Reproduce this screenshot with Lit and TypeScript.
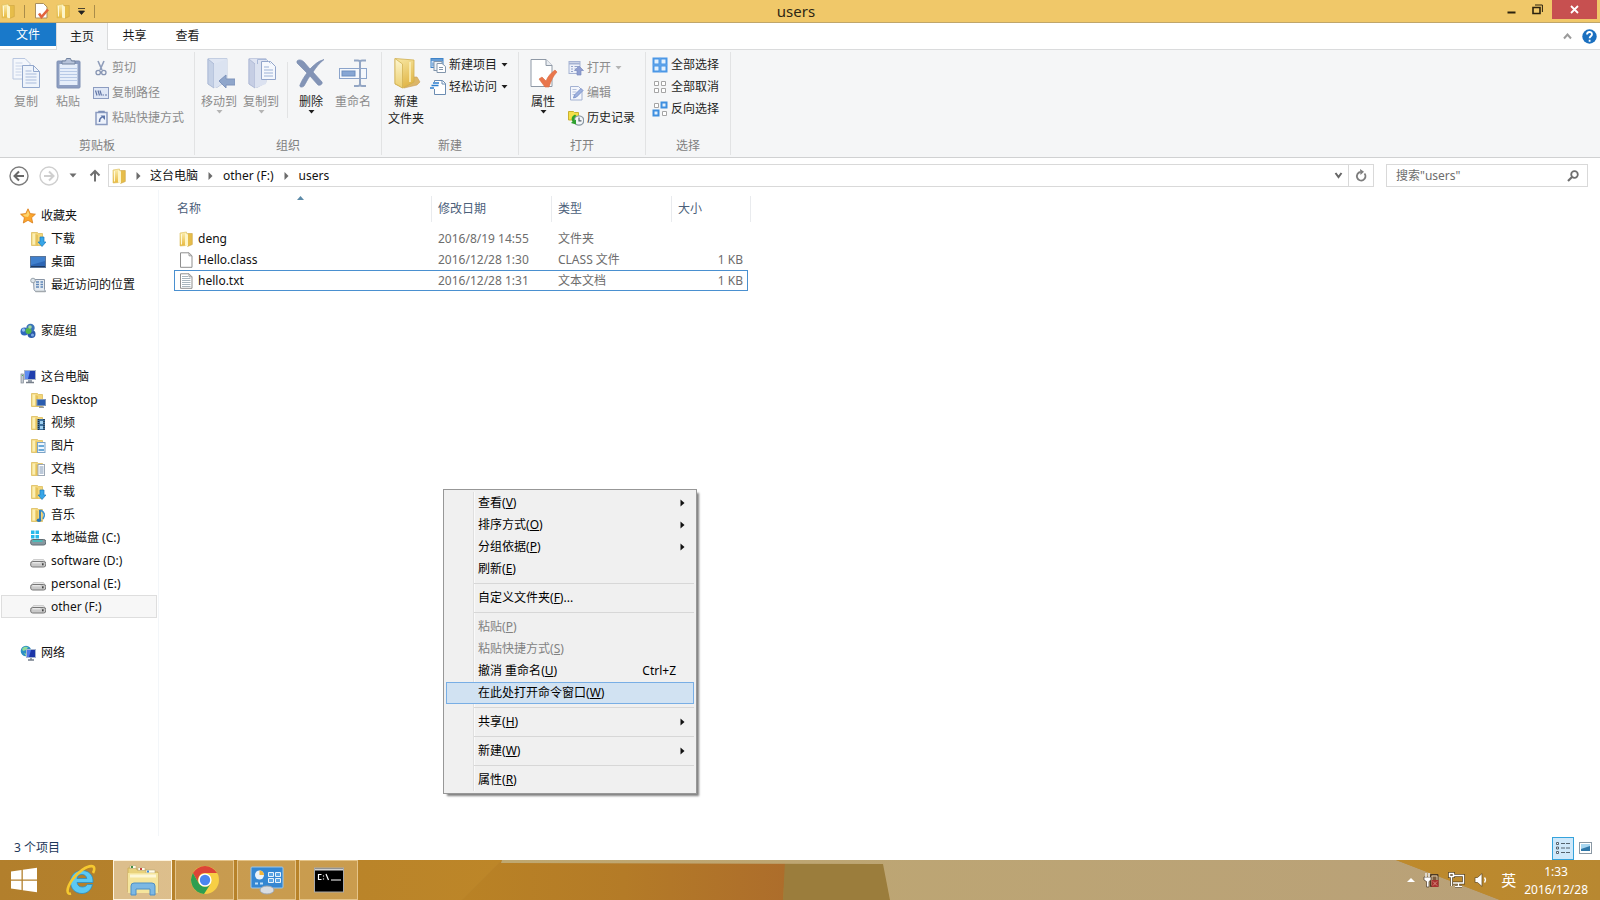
import { LitElement, html, svg, css, nothing, TemplateResult } from "lit";
import { customElement, property } from "lit/decorators.js";
import { classMap } from "lit/directives/class-map.js";

const icon = (w: number, h: number, body: unknown) =>
  html`<svg width=${w} height=${h} viewBox="0 0 ${w} ${h}" fill="none" aria-hidden="true">${body}</svg>`;

const smallFolder = svg`
  <defs><linearGradient id="gold" x2="0" y2="1"><stop offset="0" stop-color="#fbeeb0"/><stop offset="1" stop-color="#e8b83c"/></linearGradient></defs>
  <path d="M2 2 8.500 1V14.500L2 15Z" fill="url(#gold)" stroke="#dcbc58" stroke-width=".6"/>
  <path d="M9.500 2.500h4.800v11L9.500 15.500Z" fill="#e6bd4a" stroke="#cda541" stroke-width=".6"/>
  <path d="M7 2 10 3.500V15.500L7 14.500Z" fill="#fdf5c8"/>
  <path d="M3.500 3v10.500" stroke="#fff8d6"/>`;

const navFolder = svg`
  <path d="M1.500 1.500h6l1 1h4v12h-11Z" fill="#f3d67a" stroke="#dcbc60" stroke-width=".8"/>
  <path d="M2.500 2.500h3v11h-3Z" fill="#fbefb4"/>
  <path d="M5.500 3 8 4v11l-2.500-1Z" fill="#e6c35c"/>`;

const page16 = svg`
  <path d="M2.500.8h8.500l3 3v11.500H2.500Z" fill="#fff" stroke="#8f8f8f"/>
  <path d="M11 .8v3h3" stroke="#9a9a9a"/>`;

const drive = svg`
  <path d="M3.500 6.500h10L16 10H.8Z" fill="#e7e7e7" stroke="#b5b5b5" stroke-width=".6"/>
  <rect x=".7" y="8.500" width="15" height="5.500" rx="2" fill="#c9c9c9" stroke="#777"/>
  <path d="M2.500 9.800h8" stroke="#f6f6f6"/>
  <rect x="12" y="10.300" width="1.600" height="2" fill="#444"/>`;

const icons: Record<string, TemplateResult> = {
  folder: icon(16, 16, smallFolder),
  star: icon(16, 16, svg`<path d="M8 .8 10.200 5.600 15.400 6.200 11.600 9.700 12.700 15 8 12.300 3.300 15 4.400 9.700.6 6.200 5.800 5.600Z" fill="#fba62d" stroke="#d97c16" stroke-width=".8"/><path d="M8 2.500 9.500 6.300 8 9 4.800 8.500 2.500 6.800 6.300 6.200Z" fill="#fdd56f"/>`),
  download: icon(16, 16, svg`${navFolder}<path d="M10 6h4v5h2l-4 4.500L8 11h2Z" fill="#37a6e8" stroke="#1a78bd" stroke-width=".7"/>`),
  desktop: icon(16, 16, svg`<rect x=".5" y="2.500" width="15" height="11" fill="#2d66b4" stroke="#5a7599"/><path d="M1 3h14v4L1 11Z" fill="#4080cd"/><path d="M1 12.500h14" stroke="#1d3a63"/>`),
  recent: icon(16, 16, svg`<path d="M3.500 2.500h11v10l1 2h-10l-1.500-2Z" fill="#e4eaf0" stroke="#8995a5"/><path d="M6 5h3M10.500 5H13M6 7.500h3M10.500 7.500H13M6 10h3M10.500 10H13" stroke="#5f87b8" stroke-width="1.300"/><circle cx="3" cy="3.500" r="2.300" fill="#dfe5ea" stroke="#9aa5ae"/><path d="M5.500 14.500h10" stroke="#a3a9ae" stroke-width="1.500"/>`),
  homegroup: icon(16, 16, svg`<circle cx="4.500" cy="8.500" r="4" fill="#2f68bd"/><circle cx="3.500" cy="7" r="1.700" fill="#8fbcf0"/><circle cx="11.500" cy="11" r="4" fill="#2a5aa8"/><circle cx="12.500" cy="12" r="1.600" fill="#76a5e4"/><circle cx="10.500" cy="5" r="4.200" fill="#3b74b8"/><circle cx="8.500" cy="8" r="3" fill="#54b84a"/><circle cx="10" cy="4" r="1.800" fill="#9fd6a0"/>`),
  computer: icon(16, 16, svg`<rect x="4.500" y="1.500" width="11" height="9" fill="#1f3fae" stroke="#a9b6cc"/><path d="M5 2h5L8 10H5Z" fill="#5f8df0"/><path d="M8 11h4v2H8Z" fill="#9aa3ad"/><path d="M6 13.500h8" stroke="#777f8a" stroke-width="1.500"/><rect x="1" y="5" width="2.500" height="9" fill="#c5cbd2" stroke="#7f8893" stroke-width=".7"/><path d="M2 6.500h1" stroke="#4cbf4c"/>`),
  navDesktop: icon(16, 16, svg`${navFolder}<rect x="7" y="7.500" width="8.500" height="6" fill="#2a5db0" stroke="#7d94b8"/><path d="M9 15.200h5" stroke="#666f7a"/>`),
  video: icon(16, 16, svg`${navFolder}<rect x="7.500" y="4" width="7.500" height="11" fill="#3c6f9e"/><path d="M8.500 4v11M14 4v11" stroke="#1c2d3d" stroke-dasharray="1 1" stroke-width="1.300"/><path d="M10 6h3v3h-3zM10 11h3v3h-3z" fill="#9fd0f0"/>`),
  picture: icon(16, 16, svg`${navFolder}<rect x="7.500" y="4.500" width="7.500" height="10" fill="#eef6fd" stroke="#7ba3c7"/><path d="M8.500 7h5.500v2H8.500zM8.500 11h5.500v2H8.500z" fill="#6ba9d8"/>`),
  document: icon(16, 16, svg`${navFolder}<rect x="8" y="3.500" width="6.500" height="11" fill="#fff" stroke="#9da8b5"/><path d="M9.500 6h4M9.500 8h4M9.500 10h4M9.500 12h4" stroke="#7a94b4"/>`),
  music: icon(16, 16, svg`${navFolder}<path d="M10 3v10" stroke="#2878b8" stroke-width="1.800"/><path d="M10.500 3c4 2 5 5 2.500 9" stroke="#3b92d0" stroke-width="1.600"/><ellipse cx="9" cy="13.300" rx="2.300" ry="1.700" fill="#2878b8"/>`),
  diskC: icon(16, 16, svg`<path d="M1 .5h3.500V4H1zM5.500.5H9V4H5.500zM1 5h3.500v3.500H1zM5.500 5H9v3.500H5.500z" fill="#29b9ea"/><rect x=".7" y="9.500" width="15" height="5.500" rx="2" fill="#87989f" stroke="#606d74"/><path d="M2.500 11h10" stroke="#39c4c0" stroke-width="1.500"/>`),
  drive: icon(16, 16, drive),
  network: icon(16, 16, svg`<circle cx="6" cy="6" r="5.300" fill="#2c8fc4"/><path d="M2 4c2-3 5-2.500 6-1.500L6 5l-3 1Z" fill="#8fdc9a"/><path d="M4 8l3 1-1 2Z" fill="#8fdc9a"/><rect x="6.500" y="4.500" width="9" height="8" fill="#1c35a8" stroke="#a7b5d0"/><path d="M7 5h4L9 12H7Z" fill="#4f76e8"/><path d="M11 13v1.500M8 15h6" stroke="#767f8c" stroke-width="1.400"/>`),
  fileClass: icon(16, 16, page16),
  fileText: icon(16, 16, svg`${page16}<path d="M4 3.500h6M4 5.500h8.500M4 7.500h8.500M4 9.500h8.500M4 11.500h8.500M4 13.500h8.500" stroke="#a9b6be"/>`),
  qatCheck: icon(16, 16, svg`<path d="M2.500.5h8l3.500 3.500v11H2.500Z" fill="#fff" stroke="#a98f5d"/><path d="M6 10.500 8.500 14 15 6.500" stroke="#e2643c" stroke-width="2.600"/>`),
  copy: icon(32, 32, svg`<path d="M3 1.500h12l5 5V22H3Z" fill="#f4f7fc" stroke="#b9c7e0"/><path d="M5.500 6h7M5.500 9h9M5.500 12h6M5.500 15h6M5.500 18h6" stroke="#c9d4e8"/><path d="M12.500 8.500h11l6 6v16h-17Z" fill="#eff4fb" stroke="#93a8cd"/><path d="M23.500 8.500v6h6" stroke="#93a8cd"/><path d="M15.500 14h6M15.500 17h11M15.500 20h11M15.500 23h11M15.500 26h11" stroke="#a9bbdb"/>`),
  paste: icon(32, 32, svg`<rect x="5" y="4" width="23" height="27" rx="1" fill="#8d9ec1" stroke="#7f90b4"/><rect x="7.500" y="7" width="18" height="21" fill="#e6eefa"/><path d="M8 11.500h17M8 14.500h17M8 17.500h17M8 20.500h17M8 23.500h17" stroke="#b7c9e6"/><path d="M10 7V4h3.500l1-2.500h4l1 2.500H23v3Z" fill="#b7c3da" stroke="#71829f"/>`),
  cut: icon(16, 16, svg`<path d="M5 1l4 9M11 1 7 10" stroke="#8f9dba" stroke-width="1.600"/><circle cx="5.200" cy="12.500" r="2.200" stroke="#8795b3" stroke-width="1.300"/><circle cx="10.800" cy="12.500" r="2.200" stroke="#8795b3" stroke-width="1.300"/>`),
  copyPath: icon(16, 16, svg`<rect x=".5" y="2.500" width="15" height="11" fill="#dfe7f6" stroke="#8c9cc0"/><path d="M2.500 5.500l1.500 5M5 5.500l1.500 5M7 5.500 8.500 10.500M9.500 10h1.500M12 10h2" stroke="#6276a6" stroke-width="1.200"/>`),
  pasteShortcut: icon(16, 16, svg`<rect x="3" y="2.500" width="11" height="12" fill="#edf2fb" stroke="#8a9bc0" stroke-width="1.500"/><path d="M6 2.500v-1h5v1" stroke="#7e90b8" stroke-width="1.500"/><path d="M6.500 12c0-3 1-4.500 3-5" stroke="#5d74a8" stroke-width="1.500"/><path d="M7.500 5.500H12V10Z" fill="#5d74a8"/>`),
  moveTo: icon(32, 32, svg`<path d="M5 1.500h19v22l-10 7L5 27Z" fill="#dfe6f3" stroke="#c3cee2"/><path d="M5 2l6 5v24l-6-4Z" fill="#c5d1e6" stroke="#adbbd6"/><path d="M11 7 24 2v22l-13 7Z" fill="#dbe3f1"/><path d="M16 24l7-6v4h9v6h-9v3Z" fill="#8fa6cb" stroke="#7f94bb"/>`),
  copyTo: icon(32, 32, svg`<path d="M4 1.500h17v24l-9 5-8-3.500Z" fill="#dfe4f2" stroke="#c3cbe0"/><path d="M4 2l6 5v24l-6-4Z" fill="#c6cee4" stroke="#b0bbd6"/><path d="M10 7 21 3v24l-11 4Z" fill="#dce2f0"/><path d="M16.500 4.500h9l5 5v13h-14Z" fill="#f5f8fd" stroke="#93a6cb"/><path d="M12.500 7V2.500h9l4 4" stroke="#a9b9d8"/><path d="M19 10h5M19 13h9M19 16h9M19 19h9" stroke="#9db2d6"/>`),
  remove: icon(32, 32, svg`<path d="M2 4c2-2 5-1 7 1l6 7c4-4 8-8 14-9.500-5 4-8 8-11 12.500l9 10c1 2-2 4-4 3l-8-9c-3 4-4 7-6 10-2 2-5 1-4-1 2-5 4-8 7-12L2 6Z" fill="#8394b6" stroke="#7a8cb0" stroke-width=".7"/>`),
  rename: icon(32, 32, svg`<rect x="2.500" y="11.500" width="27" height="10" fill="#f5f8fc" stroke="#8ba4cb"/><rect x="5" y="14" width="13" height="5" fill="#86a6d4" stroke="#6c8ebf"/><path d="M17 3.500h4q2 0 2 2V27q0 2-2 2h-4M29 3.500h-4q-2 0-2 2V27q0 2 2 2h4" stroke="#93a6c4" stroke-width="2"/>`),
  newFolder: icon(32, 32, svg`<defs>
    <linearGradient id="face" x2=".3" y2="1"><stop offset="0" stop-color="#f8e8a4"/><stop offset="1" stop-color="#e2b84b"/></linearGradient>
    <linearGradient id="spine" x2="0" y2="1"><stop offset="0" stop-color="#fdf6cf"/><stop offset="1" stop-color="#eccf70"/></linearGradient></defs>
    <path d="M22 20h5l3 5-3 3-13 3Z" fill="#dcb668" stroke="#c9a05a" stroke-width=".6"/>
    <path d="M5 1.500 24 3v22l-11 6-8-4Z" fill="url(#face)" stroke="#cfae52" stroke-width=".8"/>
    <path d="M5 1.500 12.500 7v24L5 26.500Z" fill="url(#spine)" stroke="#d2b256" stroke-width=".8"/>
    <path d="M20 5v20" stroke="#fbf0bb" stroke-width="1.500"/>`),
  newItem: icon(16, 16, svg`<rect x="1" y="1.500" width="12" height="9" fill="#d7e8fa" stroke="#3e83c8"/><path d="M1 3h12" stroke="#3e83c8" stroke-width="1.500"/><path d="M3 5.500v4" stroke="#3e83c8"/><rect x="4" y="4.500" width="8" height="9" fill="#eef3f8" stroke="#8296ac"/><path d="M7 6.500h5l3.500 3V15.500H7Z" fill="#fff" stroke="#8296ac"/><path d="M9 10.500h4M9 12.500h4" stroke="#8296ac"/>`),
  easyAccess: icon(16, 16, svg`<path d="M4.500 9v6.500h11v-11l-3-3h-8" fill="#fff"/><path d="M4.500 10v5.500h11v-11l-3-3h-8V3" stroke="#6b8cb2"/><path d="M12 1.500V5h3.500" stroke="#6b8cb2"/><path d="M3 4h6M1.500 6.500h7M0 9h4" stroke="#2d7fd0" stroke-width="1.300"/>`),
  properties: icon(32, 32, svg`<path d="M4 2.500h15l6 6v21H4Z" fill="#fff" stroke="#8f99a6"/><path d="M19 2.500v6h6" fill="#e9edf2" stroke="#8f99a6"/><path d="M12 22l3-2 4 4c2-5 5-8 9-11l2 2c-4 4-6 9-8 15h-4Z" fill="#e9764c" stroke="#d96c42" stroke-width=".6"/>`),
  open: icon(16, 16, svg`<rect x="1" y="1.500" width="11" height="12" fill="#edf1fa" stroke="#a6b3d3"/><path d="M1 3.500h11" stroke="#a6b3d3" stroke-width="2"/><path d="M3 6.500h2M3 9h2M3 11.500h2M6.500 6.500H10M6.500 9H8" stroke="#95a5ca"/><path d="M11 6l4.500 4.500H13V15H9v-4.500H6.500Z" fill="#8f9ed0" stroke="#7a8abf" stroke-width=".7"/>`),
  edit: icon(16, 16, svg`<path d="M2.500 1.500h8L14 5v10H2.500Z" fill="#f4f6fc" stroke="#a3b1d2"/><path d="M4.500 4.500h4M4.500 7h4M4.500 9.500h3" stroke="#b5c1dd"/><path d="M5.500 13l1-3L13 3.500 15 5.500 8.500 12Z" fill="#9eb1de" stroke="#7f95cc"/>`),
  history: icon(16, 16, svg`<path d="M.5 1.500h5l1 1h4V10H.5Z" fill="#f5e048" stroke="#c9b030"/><circle cx="11" cy="10.500" r="4.700" fill="#f4f7f9" stroke="#8b98a3" stroke-width="1.300"/><path d="M11 7.500v3.300h2.500" stroke="#56636e" stroke-width="1.200"/><path d="M7 4.500C3.500 6 3 9 4.500 11.500L3 13l5 1.500V9.500L6.500 10.500C6 8.500 6.500 7 8.500 6Z" fill="#2fa12f"/>`),
  selectAll: icon(16, 16, svg`<path d="M.5.500h15v15H.5Z" fill="#4a97e6"/><path d="M2.500 2.500h4v4h-4zM9.500 2.500h4v4h-4zM2.500 9.500h4v4h-4zM9.500 9.500h4v4h-4z" fill="#e4f1fd"/><path d="M8 .5v15M.5 8h15" stroke="#7ab3ee" stroke-width=".6"/>`),
  selectNone: icon(16, 16, svg`<path d="M2.500 2.500h4v4h-4zM9.500 2.500h4v4h-4zM2.500 9.500h4v4h-4zM9.500 9.500h4v4h-4z" fill="#fff" stroke="#a5a5a5"/>`),
  invert: icon(16, 16, svg`<path d="M2.500 2.500h4v4h-4zM10.500 10.500h4v4h-4z" fill="#fff" stroke="#a5a5a5"/><path d="M9.500 1.500h5v5h-5zM1.500 9.500h5v5h-5z" fill="#e4f1fd" stroke="#3e8fe0" stroke-width="2"/>`),
};

const caret = html`<svg class="caret" width="7" height="4" viewBox="0 0 7 4" aria-hidden="true"><path d="M.5 0h6L3.500 3.500Z" fill="currentColor"/></svg>`;

@customElement("ribbon-button")
export class RibbonButton extends LitElement {
  @property() icon = "";
  @property() label = "";
  @property() second = "";
  @property({ type: Boolean }) big = false;
  @property({ type: Boolean }) off = false;
  @property({ type: Boolean }) menu = false;

  static styles = css`
    :host { display: block; }
    button {
      display: flex; align-items: center; gap: 3px; width: 100%; height: 22px; padding: 0;
      border: 0; background: none; color: #1e1e1e; font: inherit; white-space: nowrap;
    }
    button:disabled { color: #8c8c8c; }
    button:disabled .caret { color: #b4b4b4; }
    .caret { margin-left: 1px; }
    .big { flex-direction: column; height: auto; gap: 0; }
    .big svg { display: block; }
    .big span { line-height: 17px; }
    .big span:first-of-type { margin-top: 4px; }
    .big .caret { margin: 0; }
  `;

  render() {
    return html`<button type="button" class=${classMap({ big: this.big })} ?disabled=${this.off}>
      ${icons[this.icon]}<span>${this.label}</span>${this.second ? html`<span>${this.second}</span>` : nothing}${this.menu ? caret : nothing}
    </button>`;
  }
}

type NavItem = { icon: string; label: string; child?: boolean; current?: boolean };

const navGroups: NavItem[][] = [
  [
    { icon: "star", label: "收藏夹" },
    { icon: "download", label: "下载", child: true },
    { icon: "desktop", label: "桌面", child: true },
    { icon: "recent", label: "最近访问的位置", child: true },
  ],
  [{ icon: "homegroup", label: "家庭组" }],
  [
    { icon: "computer", label: "这台电脑" },
    { icon: "navDesktop", label: "Desktop", child: true },
    { icon: "video", label: "视频", child: true },
    { icon: "picture", label: "图片", child: true },
    { icon: "document", label: "文档", child: true },
    { icon: "download", label: "下载", child: true },
    { icon: "music", label: "音乐", child: true },
    { icon: "diskC", label: "本地磁盘 (C:)", child: true },
    { icon: "drive", label: "software (D:)", child: true },
    { icon: "drive", label: "personal (E:)", child: true },
    { icon: "drive", label: "other (F:)", child: true, current: true },
  ],
  [{ icon: "network", label: "网络" }],
];

const files = [
  { icon: "folder", name: "deng", date: "2016/8/19 14:55", type: "文件夹", size: "" },
  { icon: "fileClass", name: "Hello.class", date: "2016/12/28 1:30", type: "CLASS 文件", size: "1 KB" },
  { icon: "fileText", name: "hello.txt", date: "2016/12/28 1:31", type: "文本文档", size: "1 KB", focused: true },
];

type MenuItem = { label: string; key: string; tail?: string; sub?: boolean; off?: boolean; hot?: boolean; accel?: string };

const menuGroups: MenuItem[][] = [
  [
    { label: "查看", key: "V", sub: true },
    { label: "排序方式", key: "O", sub: true },
    { label: "分组依据", key: "P", sub: true },
    { label: "刷新", key: "E" },
  ],
  [{ label: "自定义文件夹", key: "F", tail: "..." }],
  [
    { label: "粘贴", key: "P", off: true },
    { label: "粘贴快捷方式", key: "S", off: true },
    { label: "撤消 重命名", key: "U", accel: "Ctrl+Z" },
    { label: "在此处打开命令窗口", key: "W", hot: true },
  ],
  [{ label: "共享", key: "H", sub: true }],
  [{ label: "新建", key: "W", sub: true }],
  [{ label: "属性", key: "R" }],
];

@customElement("context-menu")
export class ContextMenu extends LitElement {
  static styles = css`
    :host { display: block; width: 254px; box-sizing: border-box; border: 1px solid #979797; padding: 2px; background: #f0f0f0; box-shadow: 3px 3px 2px -1px rgba(0, 0, 0, 0.5); }
    .menu { background: linear-gradient(to right, transparent 27px, #dfdfdf 27px, #dfdfdf 28px, #fafafa 28px, #fafafa 29px, transparent 29px); }
    .group + .group { margin-top: 3px; }
    .group + .group::before { content: ""; display: block; height: 3px; margin-left: 28px; border-top: 1px solid #d7d7d7; }
    button {
      display: flex; align-items: center; width: 100%; height: 22px; box-sizing: border-box; padding: 0 8px 0 31px;
      border: 1px solid transparent; background: none; color: #000; font: inherit; text-align: left;
    }
    button:disabled { color: #828282; }
    .hot { background: #d1e2f2; border-color: #78aee5; }
    .label { flex: 1; }
    .accel { margin-right: 9px; }
  `;

  render() {
    return html`<div class="menu" role="menu">
      ${menuGroups.map((group) => html`<div class="group" role="group">
        ${group.map((m) => html`<button type="button" role="menuitem" class=${classMap({ hot: !!m.hot })} ?disabled=${m.off}>
          <span class="label">${m.label}(<u>${m.key}</u>)${m.tail ?? ""}</span>
          ${m.accel ? html`<span class="accel">${m.accel}</span>` : nothing}
          ${m.sub ? html`<svg width="5" height="8" viewBox="0 0 5 8" aria-hidden="true"><path d="M.5.500 4.500 4 .5 7.500Z" fill="#111"/></svg>` : nothing}
        </button>`)}
      </div>`)}
    </div>`;
  }
}

@customElement("app-root")
export class AppRoot extends LitElement {
  static styles = css`
    :host {
      display: flex; flex-direction: column; position: relative; height: 100vh; overflow: hidden; background: #fff; color: #1a1a1a;
      font: 12px/16px "Noto Sans", "Noto Sans CJK SC", sans-serif;
    }
    button, input { font: inherit; }
    button { padding: 0; border: 0; background: none; color: inherit; }
    a { color: inherit; text-decoration: none; }
    svg { flex: none; }

    .titlebar { display: flex; height: 22px; background: #f0c869; border-bottom: 1px solid #c0a66a; }
    .quick { display: flex; align-items: center; gap: 6px; width: 94px; }
    .quick svg { display: block; }
    .quick i { flex: none; width: 1px; height: 13px; margin: 0 2px; background: #a98c4a; }
    .titlebar h1 { flex: 1; margin: 0; text-align: center; font-size: 15px; line-height: 23px; font-weight: 400; color: #2e2614; }
    .controls { display: flex; align-items: flex-start; padding-right: 3px; }
    .controls button { display: grid; place-items: center; width: 26px; height: 19px; }
    .controls .restore { margin-right: 2px; }
    .controls .close { width: 45px; background: #c75050; }

    .tabs { display: flex; height: 26px; border-bottom: 1px solid #dadbdc; }
    .tabs button { width: 53px; }
    .tabs .file { width: 56px; height: 23px; background: #1979ca; color: #fff; }
    .tabs .active { box-sizing: border-box; width: 52px; height: 27px; background: #f5f6f7; border: 1px solid #dadbdc; border-width: 0 1px; }
    .tabs .tools { display: flex; flex: 1; align-items: center; justify-content: flex-end; gap: 6px; padding-right: 3px; }
    .tabs .tools button { display: grid; place-items: center; width: 16px; }

    .ribbon { display: flex; height: 107px; background: #f5f6f7; border-bottom: 1px solid #d0d1d2; }
    .group { display: flex; flex-direction: column; box-sizing: border-box; margin: 2px 0; padding-top: 5px; border-right: 1px solid #e2e3e4; }
    .tools-row { display: flex; flex: 1; }
    .caption { line-height: 16px; padding-bottom: 1px; text-align: center; color: #808080; }
    .clipboard { width: 195px; }
    .organize { width: 187px; }
    .create { width: 137px; }
    .opening { width: 127px; }
    .selecting { width: 85px; }
    .wide { width: 42px; }
    .loose { display: flex; flex-direction: column; gap: 3px; }
    .tight { display: flex; flex-direction: column; padding-left: 3px; margin-top: -3px; }
    .clipboard .tools-row { padding-left: 5px; }
    .clipboard .loose { padding-left: 4px; }
    .organize .tools-row { padding-left: 3px; }
    .rule { width: 1px; height: 56px; margin: 5px 2px 0 5px; background: #e2e3e4; }
    .create .tools-row, .opening .tools-row, .selecting .tools-row { padding-left: 3px; }
    .opening .loose { padding-left: 4px; }

    .address { display: flex; align-items: center; gap: 12px; padding: 6px 12px 3px 9px; }
    .travel { display: flex; align-items: center; gap: 10px; width: 87px; }
    .travel button { display: grid; place-items: center; }
    .travel .up { margin-left: 2px; }
    .path { display: flex; flex: 1; align-items: center; box-sizing: border-box; height: 23px; border: 1px solid #d9d9d9; }
    .crumbs { display: flex; flex: 1; align-items: center; padding-left: 2px; color: #111; }
    .crumbs .sep { margin: 0 10px; }
    .crumbs .first { margin: 0 9px; }
    .path button { display: grid; place-items: center; width: 20px; height: 21px; }
    .path .reload { width: 25px; border-left: 1px solid #d9d9d9; }
    .search { display: flex; align-items: center; box-sizing: border-box; width: 202px; height: 23px; padding: 0 8px 0 9px; border: 1px solid #d9d9d9; }
    .search input { flex: 1; min-width: 0; padding: 0; border: 0; outline: 0; background: none; }
    .search input::placeholder { color: #6d6d6d; opacity: 1; }

    .body { display: flex; flex: 1; min-height: 0; }
    nav { box-sizing: border-box; width: 159px; padding: 14px 1px 0 1px; border-right: 1px solid #f3f6f9; }
    nav ul { margin: 0 0 23px; padding: 0; list-style: none; }
    nav a { display: flex; align-items: center; gap: 5px; box-sizing: border-box; height: 23px; padding-left: 18px; border: 1px solid transparent; color: #111; white-space: nowrap; }
    nav .child { padding-left: 28px; }
    nav .current { background: #f7f7f7; border-color: #dedede; }

    .files { flex: 1; padding: 6px 0 0 15px; }
    table { width: 577px; border-spacing: 0; table-layout: fixed; }
    .c-name { width: 258px; }
    .c-mid { width: 120px; }
    .c-size { width: 76px; }
    .c-rest { width: 3px; }
    th { position: relative; height: 26px; padding: 0 0 0 6px; font-weight: 400; text-align: left; color: #4c607a; border-right: 1px solid #e9ebee; }
    th:first-child { padding-left: 3px; }
    .sort { position: absolute; left: 123px; top: 0; }
    thead::after { content: ""; display: block; height: 6px; }
    tbody td { height: 19px; padding: 0 0 0 6px; border: 1px solid transparent; border-width: 1px 0; color: #6d6d6d; }
    tbody .name { padding-left: 3px; border-left-width: 1px; color: #111; }
    tbody .size { padding-right: 4px; text-align: right; border-right-width: 1px; }
    tbody .rest { padding: 0; }
    .focused td:not(.rest) { border-color: #4a90d0; }
    .cell { display: flex; align-items: center; gap: 4px; height: 19px; }

    .status { display: flex; align-items: center; justify-content: space-between; height: 24px; padding: 0 4px 0 14px; color: #1e395b; }
    .views { display: flex; }
    .views button { display: grid; place-items: center; box-sizing: border-box; width: 22px; height: 23px; }
    .views .on { background: #cfe8fa; border: 1px solid #35a3dc; }

    .taskbar { position: relative; display: flex; height: 40px; background: #b8862f; }
    .wallpaper { position: absolute; inset: 0; width: 100%; height: 100%; }
    .apps, .tray { position: relative; display: flex; }
    .apps { flex: 1; gap: 3px; }
    .apps button { display: grid; place-items: center; box-sizing: border-box; width: 59px; height: 40px; }
    .apps .start { width: 48px; }
    .apps .running { background: rgba(236, 209, 160, 0.32); border: 1px solid rgba(255, 236, 195, 0.5); }
    .apps .front { background: rgba(247, 232, 205, 0.6); border-color: #fdf3de; }
    .tray { align-items: center; gap: 8px; padding-right: 12px; color: #fff; }
    .tray button { display: grid; place-items: center; height: 40px; }
    .tray .ime { font-size: 15px; padding: 0 0 0 4px; }
    .tray .clock { line-height: 18px; padding-top: 1px; text-align: center; }

    context-menu { position: absolute; left: 443px; top: 489px; }
  `;

  private crumb(first = false) {
    return html`<svg class=${first ? "first" : "sep"} width="5" height="8" viewBox="0 0 5 8" aria-hidden="true"><path d="M.5 0 4.500 4 .5 8Z" fill="#6b6b6b"/></svg>`;
  }

  private ribbon() {
    return html`<section class="ribbon" aria-label="主页">
      <div class="group clipboard">
        <div class="tools-row">
          <ribbon-button class="wide" big off icon="copy" label="复制"></ribbon-button>
          <ribbon-button class="wide" big off icon="paste" label="粘贴"></ribbon-button>
          <div class="loose">
            <ribbon-button off icon="cut" label="剪切"></ribbon-button>
            <ribbon-button off icon="copyPath" label="复制路径"></ribbon-button>
            <ribbon-button off icon="pasteShortcut" label="粘贴快捷方式"></ribbon-button>
          </div>
        </div>
        <div class="caption">剪贴板</div>
      </div>
      <div class="group organize">
        <div class="tools-row">
          <ribbon-button class="wide" big off menu icon="moveTo" label="移动到"></ribbon-button>
          <ribbon-button class="wide" big off menu icon="copyTo" label="复制到"></ribbon-button>
          <div class="rule"></div>
          <ribbon-button class="wide" big menu icon="remove" label="删除"></ribbon-button>
          <ribbon-button class="wide" big off icon="rename" label="重命名"></ribbon-button>
        </div>
        <div class="caption">组织</div>
      </div>
      <div class="group create">
        <div class="tools-row">
          <ribbon-button class="wide" big icon="newFolder" label="新建" second="文件夹"></ribbon-button>
          <div class="tight">
            <ribbon-button menu icon="newItem" label="新建项目"></ribbon-button>
            <ribbon-button menu icon="easyAccess" label="轻松访问"></ribbon-button>
          </div>
        </div>
        <div class="caption">新建</div>
      </div>
      <div class="group opening">
        <div class="tools-row">
          <ribbon-button class="wide" big menu icon="properties" label="属性"></ribbon-button>
          <div class="loose">
            <ribbon-button off menu icon="open" label="打开"></ribbon-button>
            <ribbon-button off icon="edit" label="编辑"></ribbon-button>
            <ribbon-button icon="history" label="历史记录"></ribbon-button>
          </div>
        </div>
        <div class="caption">打开</div>
      </div>
      <div class="group selecting">
        <div class="tools-row">
          <div class="tight">
            <ribbon-button icon="selectAll" label="全部选择"></ribbon-button>
            <ribbon-button icon="selectNone" label="全部取消"></ribbon-button>
            <ribbon-button icon="invert" label="反向选择"></ribbon-button>
          </div>
        </div>
        <div class="caption">选择</div>
      </div>
    </section>`;
  }

  private taskbar() {
    return html`<footer class="taskbar">
      <svg class="wallpaper" viewBox="0 0 1600 40" preserveAspectRatio="none" aria-hidden="true">
        <defs>
          <linearGradient id="left"><stop offset="0" stop-color="#b27f2c"/><stop offset="1" stop-color="#bd8628"/></linearGradient>
          <linearGradient id="mid"><stop offset="0" stop-color="#b98225"/><stop offset=".5" stop-color="#b47b27"/><stop offset="1" stop-color="#ad6d2b"/></linearGradient>
          <linearGradient id="sand"><stop offset="0" stop-color="#bfa871"/><stop offset="1" stop-color="#b9a178"/></linearGradient>
          <linearGradient id="right"><stop offset="0" stop-color="#be8a2c"/><stop offset="1" stop-color="#b88831"/></linearGradient>
        </defs>
        <path d="M0 0H502L462 40H0Z" fill="url(#left)"/>
        <path d="M502 0H786L783 40H462Z" fill="url(#mid)"/>
        <path d="M785 0H883L890 40H783Z" fill="#9b7d3c"/>
        <path d="M502 0H1396L1500 40H890L883 4 501 3Z" fill="url(#sand)"/>
        <path d="M1396 0H1600V40H1500Z" fill="url(#right)"/>
      </svg>
      <div class="apps">
        <button type="button" class="start" aria-label="开始">
          <svg width="28" height="26" viewBox="0 0 28 26" aria-hidden="true"><path d="M1 4.500 11.500 3v9.500H1ZM12.800 2.800 27 .8v11.700H12.800ZM1 13.700h10.500V23L1 21.500ZM12.800 13.700H27V25.200L12.800 23.200Z" fill="#fff"/></svg>
        </button>
        <button type="button" aria-label="Internet Explorer">
          <svg width="32" height="32" viewBox="0 0 32 32" fill="none" aria-hidden="true">
            <path d="M28 18.500H12C12.500 21.500 14.500 23 17.300 23c2.300 0 4-.8 5-2.500h5.200C26 26.500 22 29.500 17 29.500 10 29.500 5.500 24.500 5.500 18S10 6.500 17 6.500c7.500 0 11.500 5 11 12ZM12 14.500h9.800C21.300 11.800 19.500 10.500 17 10.500c-2.700 0-4.500 1.400-5 4Z" fill="#5cc9f3" stroke="#2b8dc4" stroke-width=".8"/>
            <path d="M6 29.500C1 31 1.500 24 7 16S23 1 27.500 2.300c2.500.7 2 4 .5 6.700" stroke="#f6c92f" stroke-width="2.600"/>
          </svg>
        </button>
        <button type="button" class="running front" aria-label="文件资源管理器">
          <svg width="34" height="32" viewBox="0 0 34 32" aria-hidden="true">
            <path d="M2 4h8l1 2h10l1 2h10v20H2Z" fill="#e9d27c" stroke="#c9ab57" stroke-width=".8"/>
            <path d="M4 1.500h6v3H4zM12 3.500h7v3h-7zM20 6h9v3h-9z" fill="#fffbe9" stroke="#b9a872" stroke-width=".6"/>
            <path d="M5 2h2v2H5z" fill="#3f8d45"/><path d="M14 4h2v2h-2z" fill="#c8433d"/><path d="M21 6.500h2v2h-2z" fill="#3f8dd0"/>
            <path d="M2 9h30v20H2Z" fill="#f5e59c"/><path d="M4 12h26" stroke="#fdf7d6" stroke-width="3"/>
            <path d="M5 31v-9q0-3 3-3h18q3 0 3 3v9h-5v-6H10v6Z" fill="#7cb8e4" stroke="#4c8fc6"/>
          </svg>
        </button>
        <button type="button" class="running" aria-label="Google Chrome">
          <svg width="30" height="30" viewBox="0 0 30 30" aria-hidden="true">
            <circle cx="15" cy="15" r="14" fill="#f7cf45"/>
            <path d="M2.900 8A14 14 0 0 1 27.100 8H15a7 7 0 0 0-6.100 10.500Z" fill="#dc4437"/>
            <path d="M2.900 8A14 14 0 0 0 14 29l6.500-10A7 7 0 0 1 8.900 18.500Z" fill="#2e9e50"/>
            <circle cx="15" cy="15" r="6.600" fill="#fff"/><circle cx="15" cy="15" r="5.200" fill="#4a86ee"/>
          </svg>
        </button>
        <button type="button" class="running" aria-label="控制面板">
          <svg width="34" height="30" viewBox="0 0 34 30" fill="none" aria-hidden="true">
            <rect x="1" y="2" width="32" height="21" rx="1" fill="#3487d2" stroke="#9cc7ea"/>
            <circle cx="9.500" cy="10" r="4.500" fill="#e9f3fb"/><path d="M9.500 10V5.500a4.500 4.500 0 0 1 4.500 4.500Z" fill="#f1b53a"/>
            <path d="M18.500 7.500h5v4h-5zM25.500 7.500h5v4h-5zM18.500 13.500h5v4h-5zM25.500 13.500h5v4h-5z" fill="#5ea6e3" stroke="#e9f3fb"/>
            <path d="M5 18.500h3M10 18.500h3" stroke="#bfe0f8" stroke-width="2"/>
            <ellipse cx="17" cy="25" rx="7" ry="4" fill="#d9dde2" stroke="#9fa6ae"/>
          </svg>
        </button>
        <button type="button" class="running" aria-label="命令提示符">
          <svg width="30" height="26" viewBox="0 0 30 26" fill="none" aria-hidden="true">
            <rect x=".5" y="1" width="29" height="24" fill="#000" stroke="#a9a9a9"/><path d="M1 2.500h28" stroke="#d0d0d0" stroke-width="2"/>
            <path d="M7.500 7.500h-3v5h3M9.500 8.500v1M9.500 11.500v1M12 7l2.500 6M17 13h10" stroke="#fff" stroke-width="1.200"/>
          </svg>
        </button>
      </div>
      <div class="tray">
        <button type="button" aria-label="显示隐藏的图标"><svg width="8" height="4" viewBox="0 0 8 4"><path d="M0 4 4 0l4 4Z" fill="#fff"/></svg></button>
        <button type="button" aria-label="电源">
          <svg width="17" height="16" viewBox="0 0 17 16" fill="none"><path d="M7.500 2.500h7.500v12h-7.500z" fill="#7a5a3a" stroke="#4b3a25"/><path d="M9 4h5v9H9z" stroke="#d8c6a8"/><path d="M3 1v4M6 1v4M1 5h7v3L6 9.500V15H3.500V9.500L1 8Z" fill="#fff" stroke="#4b3a25" stroke-width=".7"/><path d="M3 1v4M6 1v4" stroke="#fff" stroke-width="1.400"/><path d="M8.500 8h7v7h-7z" fill="#a83230"/><path d="m10 9.500 4 4m0-4-4 4" stroke="#d98a80"/></svg>
        </button>
        <button type="button" aria-label="网络">
          <svg width="17" height="16" viewBox="0 0 17 16" fill="none"><path d="M6 3.500h9.500v7.500H5M10.500 11v3M7 14.500h7M1.500 1.500h4v3h-4zM3.500 5v9" stroke="#5a4520" stroke-width="3"/><path d="M6 3.500h9.500v7.500H5M10.500 11v3M7 14.500h7M1.500 1.500h4v3h-4zM3.500 5v9" stroke="#fff" stroke-width="1.400"/></svg>
        </button>
        <button type="button" aria-label="音量">
          <svg width="16" height="16" viewBox="0 0 16 16" fill="none"><path d="M2 5.500h2.500L9 1.500v13L4.500 10.500H2Z" fill="#fff" stroke="#6b5226" stroke-width=".8"/><path d="M11.500 5.500q2 2.500 0 5" stroke="#fff" stroke-width="1.300"/></svg>
        </button>
        <button type="button" class="ime">英</button>
        <div class="clock"><div>1:33</div><div>2016/12/28</div></div>
      </div>
    </footer>`;
  }

  render() {
    return html`
      <header class="titlebar">
        <div class="quick">
          ${icons.folder}<i></i>${icons.qatCheck}${icons.folder}
          <svg width="9" height="7" viewBox="0 0 9 7"><path d="M1 .5h7M1.500 3h6l-3 3.500Z" fill="#222" stroke="#222" stroke-width=".8"/></svg><i></i>
        </div>
        <h1>users</h1>
        <div class="controls">
          <button type="button" aria-label="最小化"><svg width="9" height="9" viewBox="0 0 9 9"><path d="M.5 6.500h8v2h-8z" fill="#2b220f"/></svg></button>
          <button type="button" class="restore" aria-label="还原"><svg width="11" height="11" viewBox="0 0 11 11" fill="none"><path d="M1 3.500h7v6H1Z" stroke="#2b220f" stroke-width="1.600"/><path d="M3 1h7.400v7" stroke="#2b220f"/></svg></button>
          <button type="button" class="close" aria-label="关闭"><svg width="9" height="9" viewBox="0 0 9 9"><path d="m1 1 7 7m0-7L1 8" stroke="#fff" stroke-width="1.800"/></svg></button>
        </div>
      </header>

      <div class="tabs">
        <button type="button" class="file">文件</button>
        <button type="button" class="active">主页</button>
        <button type="button">共享</button>
        <button type="button">查看</button>
        <div class="tools">
          <button type="button" aria-label="最小化功能区"><svg width="9" height="7" viewBox="0 0 9 7" fill="none"><path d="m1 5.500 3.500-4 3.500 4" stroke="#9b9b9b" stroke-width="2"/></svg></button>
          <button type="button" aria-label="帮助"><svg width="15" height="15" viewBox="0 0 15 15" fill="none"><circle cx="7.500" cy="7.500" r="7.200" fill="#1b70c0"/><path d="M5 5.500c0-3.300 5-3.300 5-.3 0 2-2.400 2-2.400 4M7.600 10.800v1.900" stroke="#fff" stroke-width="1.800"/></svg></button>
        </div>
      </div>

      ${this.ribbon()}

      <div class="address">
        <div class="travel">
          <button type="button" aria-label="后退"><svg width="20" height="20" viewBox="0 0 20 20" fill="none"><circle cx="10" cy="10" r="9" stroke="#7d7d7d" stroke-width="1.400"/><path d="M15 10H6M10 5.500 5.500 10l4.500 4.500" stroke="#686868" stroke-width="2"/></svg></button>
          <button type="button" aria-label="前进" disabled><svg width="20" height="20" viewBox="0 0 20 20" fill="none"><circle cx="10" cy="10" r="9" stroke="#cfcfcf" stroke-width="1.400"/><path d="M5 10h9M10 5.500l4.500 4.500-4.500 4.500" stroke="#cfcfcf" stroke-width="2"/></svg></button>
          <button type="button" aria-label="最近位置"><svg width="8" height="5" viewBox="0 0 8 5"><path d="M.5.500h7L4 4.500Z" fill="#6d6d6d"/></svg></button>
          <button type="button" class="up" aria-label="上移"><svg width="12" height="13" viewBox="0 0 12 13" fill="none"><path d="M6 12.500V2M1.500 6.500 6 2l4.500 4.500" stroke="#707070" stroke-width="2"/></svg></button>
        </div>
        <div class="path">
          <div class="crumbs">
            ${icons.folder}${this.crumb(true)}<a href="#pc">这台电脑</a>${this.crumb()}<a href="#f">other (F:)</a>${this.crumb()}<a href="#users">users</a>
          </div>
          <button type="button" aria-label="以前的位置"><svg width="9" height="7" viewBox="0 0 9 7" fill="none"><path d="m1.500 1 3 4 3-4" stroke="#666" stroke-width="2"/></svg></button>
          <button type="button" class="reload" aria-label="刷新"><svg width="12" height="13" viewBox="0 0 12 13" fill="none"><path d="M9.500 4.500A4.300 4.300 0 1 1 5.500 3" stroke="#7d7d7d" stroke-width="1.800"/><path d="M5 0l4 2.800L5.500 6Z" fill="#7d7d7d"/></svg></button>
        </div>
        <label class="search">
          <input type="text" aria-label="搜索" placeholder='搜索"users"' />
          <svg width="12" height="12" viewBox="0 0 12 12" fill="none"><circle cx="7.500" cy="4.500" r="3.300" stroke="#6d6d6d" stroke-width="1.800"/><path d="M5 7 1 11" stroke="#6d6d6d" stroke-width="2.200"/></svg>
        </label>
      </div>

      <div class="body">
        <nav>
          ${navGroups.map((group) => html`<ul>
            ${group.map((n) => html`<li><a href="#" class=${classMap({ child: !!n.child, current: !!n.current })}>${icons[n.icon]}<span>${n.label}</span></a></li>`)}
          </ul>`)}
        </nav>
        <main class="files">
          <table>
            <colgroup><col class="c-name" /><col class="c-mid" /><col class="c-mid" /><col class="c-size" /><col class="c-rest" /></colgroup>
            <thead><tr>
              <th>名称<svg class="sort" width="7" height="4" viewBox="0 0 7 4"><path d="M0 4 3.500 0 7 4Z" fill="#5c8aa8"/></svg></th>
              <th>修改日期</th><th>类型</th><th colspan="2">大小</th>
            </tr></thead>
            <tbody>
              ${files.map((f) => html`<tr class=${classMap({ focused: !!f.focused })}>
                <td class="name"><div class="cell">${icons[f.icon]}<span>${f.name}</span></div></td>
                <td>${f.date}</td><td>${f.type}</td><td class="size">${f.size}</td><td class="rest"></td>
              </tr>`)}
            </tbody>
          </table>
        </main>
      </div>

      <div class="status">
        <span>3 个项目</span>
        <div class="views">
          <button type="button" class="on" aria-label="详细信息"><svg width="16" height="14" viewBox="0 0 16 14" fill="none"><path d="M1.500 1.500h2v2h-2zM1.500 6h2v2h-2zM1.500 10.500h2v2h-2z" fill="#fff" stroke="#55636e"/><path d="M6 2.500h4M11 2.500h4M6 7h4M11 7h4M6 11.500h4M11 11.500h4" stroke="#55636e"/></svg></button>
          <button type="button" aria-label="大图标"><svg width="13" height="12" viewBox="0 0 13 12"><rect x=".5" y=".5" width="12" height="11" fill="#fff" stroke="#8a98a4"/><path d="M2 2h9v7H2z" fill="#2f77a8"/><path d="M2 2h9v2L2 7Z" fill="#a8d6f0"/></svg></button>
        </div>
      </div>

      ${this.taskbar()}
      <context-menu></context-menu>
    `;
  }
}
